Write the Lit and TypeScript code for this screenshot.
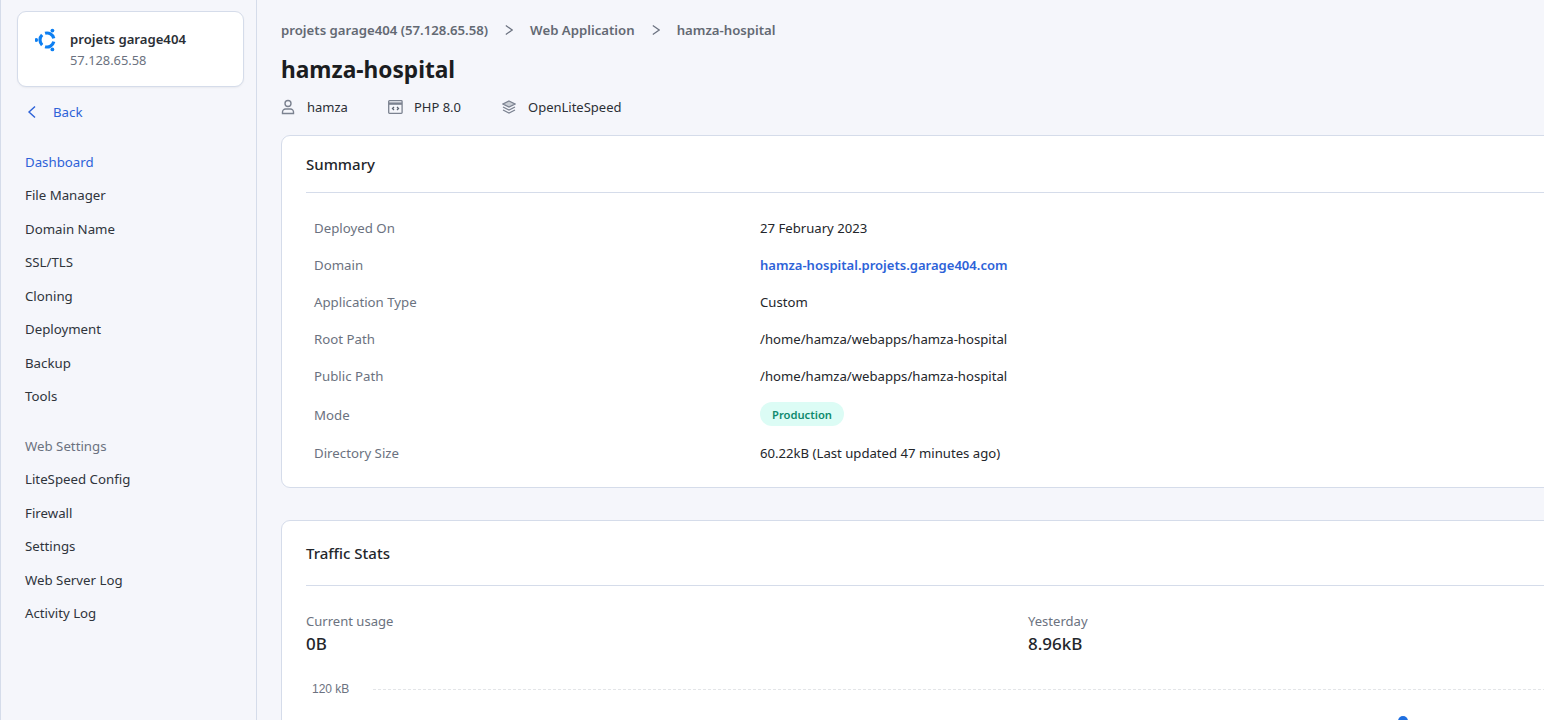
import { LitElement, html, css, svg } from "lit";
import { customElement } from "lit/decorators.js";

const NAV = ["File Manager", "Domain Name", "SSL/TLS", "Cloning", "Deployment", "Backup", "Tools"];
const NAV2 = ["LiteSpeed Config", "Firewall", "Settings", "Web Server Log", "Activity Log"];
const pt = (deg: number, r: number) => {
  const a = (deg * Math.PI) / 180;
  return `${(12 + r * Math.cos(a)).toFixed(2)} ${(12 - r * Math.sin(a)).toFixed(2)}`;
};
const arc = (from: number, to: number) => `M${pt(from, 7)}A7 7 0 0 1 ${pt(to, 7)}`;
const ubuntu = svg`<svg width="24" height="24" viewBox="0 0 24 24" fill="none" class="logo">
  <circle cx="1.2" cy="12" r="1.9" fill="#0d7ff2"/><circle cx="17.4" cy="2.6" r="1.9" fill="#0d7ff2"/><circle cx="17.4" cy="21.4" r="1.9" fill="#0d7ff2"/>
  <path d="${arc(226, 134)}${arc(346, 254)}${arc(106, 14)}" stroke="#0d7ff2" stroke-width="3.2"/>
</svg>`;
const sep = svg`<svg width="8" height="12" viewBox="0 0 8 12" fill="none"><path d="M.8 1.5 7.2 6 .8 10.5" stroke="#6b7280" stroke-width="1.2"/></svg>`;

@customElement("app-root")
export class AppRoot extends LitElement {
  static styles = css`
    :host { display: block; width: 1544px; height: 720px; overflow: hidden; background: #f5f6fb; color: #1f2328; font-family: "Noto Sans", sans-serif; font-size: 13.25px; }
    .shell { display: flex; height: 720px; }
    .side { box-sizing: border-box; flex: 0 0 257px; height: 720px; border-left: 1px solid #d5dcea; border-right: 1px solid #d5dcea; padding: 11px 12px 0 16px; }
    .server { box-sizing: border-box; height: 76px; background: #fff; border: 1px solid #d5dcea; border-radius: 9px; box-shadow: 0 1px 2px #0000000d; display: flex; align-items: center; padding: 0 0 0 17px; gap: 11px; }
    .logo { align-self: flex-start; margin-top: 16px; flex: none; }
    .id { padding-top: 1px; }
    .server b { display: block; font-weight: 600; font-size: 13.15px; line-height: 20px; color: #2b2f36; }
    .server span { display: block; margin-top: 1px; font-size: 12.85px; line-height: 21px; color: #6b7280; }
    .back { display: flex; align-items: center; gap: 16px; height: 20px; margin: 15px 0 0 10px; color: #2d62d8; }
    .nav { margin: 23.5px 0 0 8px; display: flex; flex-direction: column; }
    .nav a { height: 33.5px; line-height: 33.5px; color: #2f343b; }
    .nav a.on { color: #2d62d8; }
    .nav h4 { margin: 16px 0 0; height: 33.5px; line-height: 33.5px; font-weight: 400; font-size: 13.25px; color: #6b7280; }
    .main { flex: 1; min-width: 0; padding: 0 0 0 24px; overflow: hidden; }
    .crumb { display: flex; align-items: center; height: 20px; margin-top: 20px; color: #636973; font-weight: 600; font-size: 13.2px; gap: 17px; white-space: nowrap; }
    h1 { margin: 12px 0 0; font-size: 22.7px; line-height: 36px; font-weight: 700; color: #1b1d21; }
    .meta { display: flex; align-items: center; margin-top: 9px; height: 20px; color: #2b2f36; font-size: 13px; }
    .meta div { display: flex; align-items: center; margin-right: 40px; gap: 12px; }
    .meta div:nth-child(2) { gap: 11px; margin-right: 41px; }
    .card { box-sizing: border-box; width: 1500px; background: #fff; border: 1px solid #d5dcea; border-radius: 9px; padding: 0 24px; }
    .c1 { height: 353px; margin-top: 18px; }
    .c2 { height: 300px; margin-top: 32px; }
    .head { height: 56px; line-height: 57px; font-size: 15px; font-weight: 500; color: #23262b; border-bottom: 1px solid #d5dcea; }
    .c2 .head { height: 64px; line-height: 65px; }
    .rows { display: grid; grid-template-columns: 446px 1fr; grid-template-rows: repeat(5, 37px) 40px 37px; padding: 16px 8px 0; align-items: center; }
    .rows .k { color: #6b7280; }
    .rows .k.mode { padding-top: 2px; }
    .rows .v { color: #23262b; font-size: 13.15px; }
    .rows .link { color: #2d62d8; font-weight: 600; font-size: 13.05px; }
    .pill { display: inline-block; background: #dcfcf5; color: #0f8a6e; font-size: 11.2px; font-weight: 600; border-radius: 12px; padding: 2px 12px 0; line-height: 22px; }
    .stats { display: grid; grid-template-columns: 722px 1fr; padding-top: 25px; }
    .stats small { display: block; font-size: 13.05px; line-height: 20px; color: #6b7280; }
    .stats strong { display: block; font-size: 17px; line-height: 26px; font-weight: 500; color: #23262b; }
    .chart { display: flex; align-items: center; margin-top: 23px; height: 18px; gap: 24px; font-family: "Liberation Sans", sans-serif; font-size: 12px; color: #6b7280; padding-left: 6px; }
    .chart i { flex: 1; border-top: 1px dashed #e3e5e8; }
    .dot { position: absolute; left: 1398px; top: 716px; width: 10px; height: 10px; border-radius: 50%; background: #1f6fe0; }
  `;
  render() {
    return html`<div class="shell">
      <aside class="side">
        <div class="server">${ubuntu}<div class="id"><b>projets garage404</b><span>57.128.65.58</span></div></div>
        <div class="back"><svg width="10" height="14" viewBox="0 0 10 14" fill="none"><path d="M8 1.5 2 7l6 5.5" stroke="#2d62d8" stroke-width="1.4"/></svg><span>Back</span></div>
        <nav class="nav">
          <a class="on">Dashboard</a>
          ${NAV.map((n) => html`<a>${n}</a>`)}
          <h4>Web Settings</h4>
          ${NAV2.map((n) => html`<a>${n}</a>`)}
        </nav>
      </aside>
      <main class="main">
        <div class="crumb"><span>projets garage404 (57.128.65.58)</span>${sep}<span>Web Application</span>${sep}<span>hamza-hospital</span></div>
        <h1>hamza-hospital</h1>
        <div class="meta">
          <div><svg width="14" height="16" viewBox="0 0 14 16" fill="none" stroke="#7b8290" stroke-width="1.4"><circle cx="7" cy="4.5" r="3"/><path d="M1.5 14.5v-1.5a3 3 0 0 1 3-3h5a3 3 0 0 1 3 3v1.5z"/></svg><span>hamza</span></div>
          <div><svg width="15" height="14" viewBox="0 0 15 14" fill="none" stroke="#7b8290" stroke-width="1.3"><rect x=".7" y=".7" width="13.4" height="12.6" rx=".8"/><path d="M1 3.6h13" stroke-width="2.4"/><path d="M6 7l-1.5 1.5L6 10M9 7l1.5 1.5L9 10" stroke="#5c6370"/></svg><span>PHP 8.0</span></div>
          <div><svg width="14" height="14" viewBox="0 0 14 14" fill="#c9cdd4" stroke="#7b8290" stroke-width="1.2"><path d="M7 1 13 4 7 7 1 4z"/><path d="M1 7l6 3 6-3" fill="none"/><path d="M1 10l6 3 6-3" fill="none"/></svg><span>OpenLiteSpeed</span></div>
        </div>
        <section class="card c1">
          <div class="head">Summary</div>
          <div class="rows">
            <span class="k">Deployed On</span><span class="v">27 February 2023</span>
            <span class="k">Domain</span><span class="v link">hamza-hospital.projets.garage404.com</span>
            <span class="k">Application Type</span><span class="v">Custom</span>
            <span class="k">Root Path</span><span class="v">/home/hamza/webapps/hamza-hospital</span>
            <span class="k">Public Path</span><span class="v">/home/hamza/webapps/hamza-hospital</span>
            <span class="k mode">Mode</span><span class="v"><span class="pill">Production</span></span>
            <span class="k">Directory Size</span><span class="v">60.22kB (Last updated 47 minutes ago)</span>
          </div>
        </section>
        <section class="card c2">
          <div class="head">Traffic Stats</div>
          <div class="stats">
            <div><small>Current usage</small><strong>0B</strong></div>
            <div><small>Yesterday</small><strong>8.96kB</strong></div>
          </div>
          <div class="chart"><span>120 kB</span><i></i></div>
          <div class="dot"></div>
        </section>
      </main>
    </div>`;
  }
}
